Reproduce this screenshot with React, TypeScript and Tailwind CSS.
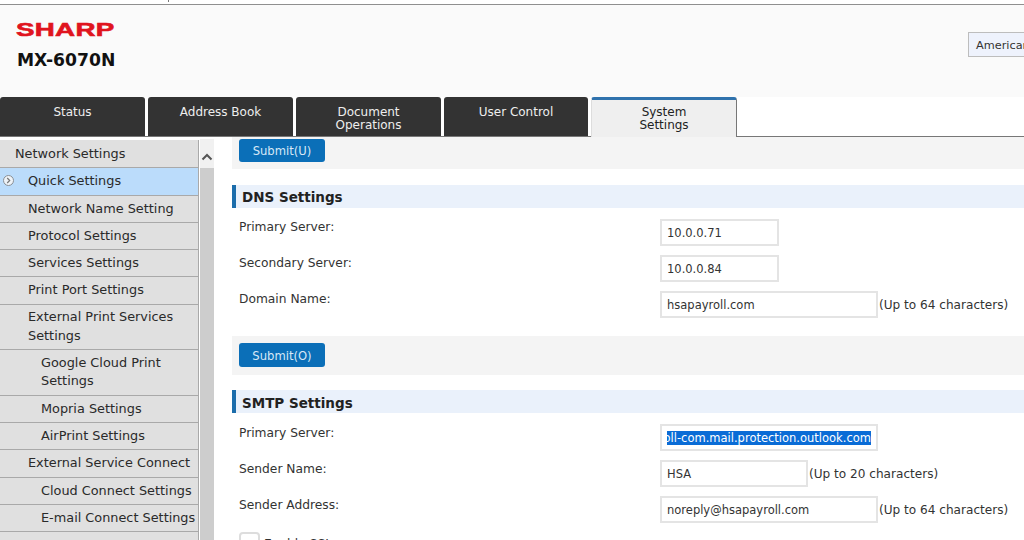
import React from "react";

const font = { fontFamily: '"DejaVu Sans", Verdana, sans-serif' };

function Tab({ label, active, w }: { label: string[]; active?: boolean; w: string }) {
  return (
    <div
      className={
        active
          ? `${w} h-[40px] mr-[3px] rounded-t-[3px] bg-[#efefef] border-t-[3px] border-t-[#2f72ad] border-r border-r-[#777] border-l border-l-[#ddd] flex flex-col items-center pt-[6px] text-[#222] text-[12px] leading-[12.5px] relative z-10`
          : `${w} h-[39px] mr-[3px] rounded-t-[3px] bg-[#333333] flex flex-col items-center pt-[9px] text-[#eeeeee] text-[12px] leading-[12.5px]`
      }
    >
      {label.map((l) => (
        <span key={l}>{l}</span>
      ))}
    </div>
  );
}

function NavItem({
  text,
  level,
  selected,
  h = "h-[27.3px]",
}: {
  text: string[];
  level: 0 | 1 | 2;
  selected?: boolean;
  h?: string;
}) {
  const pad = level === 0 ? "pl-[15px]" : level === 1 ? "pl-[28px]" : "pl-[41px]";
  return (
    <div
      className={`${pad} ${h} ${
        selected ? "bg-[#bbdcfb]" : "bg-[#e0e0e0]"
      } border-b border-b-[#a9a9a9] flex flex-col justify-center text-[12.85px] leading-[18.3px] text-[#2a2a2a] whitespace-nowrap relative`}
    >
      {selected && (
        <svg className="absolute left-[2px] top-[6px]" width="13" height="13" viewBox="0 0 13 13">
          <circle cx="6.5" cy="6.5" r="5" fill="#eef3f8" stroke="#8a8f95" strokeWidth="1" />
          <path d="M5.2 4l2.5 2.5L5.2 9" fill="none" stroke="#777" strokeWidth="1.2" />
        </svg>
      )}
      {text.map((t) => (
        <span key={t}>{t}</span>
      ))}
    </div>
  );
}

function SubmitBar({ label, cls, btnCls }: { label: string; cls: string; btnCls: string }) {
  return (
    <div className={`bg-[#f4f4f4] pl-[7px] ${cls}`}>
      <div
        className={`${btnCls} w-[86px] rounded-[3px] bg-[#0b6fb8] text-[#d8e8f6] text-[11.6px] pt-[3px] flex items-center justify-center`}
      >
        {label}
      </div>
    </div>
  );
}

function SectionHeader({ title, pt }: { title: string; pt: string }) {
  return (
    <div className={`h-[23px] bg-[#eaf1fb] border-l-[4px] border-l-[#1c6dab] pl-[6px] ${pt} flex items-center text-[13.5px] font-bold text-[#222]`}>
      {title}
    </div>
  );
}

function Row({
  label,
  value,
  w,
  hint,
  selected,
  labelPt,
}: {
  label: string;
  value: string;
  w: string;
  hint?: string;
  selected?: boolean;
  labelPt: string;
}) {
  return (
    <div className="grid grid-cols-[421px_1fr] pl-[7px] h-[36px]">
      <div className={`text-[12.25px] leading-[16px] text-[#333] ${labelPt}`}>{label}</div>
      <div className="flex items-start">
        <div
          className={`${w} h-[27px] border-2 border-[#e4e4e4] bg-white text-[11.5px] text-[#333] px-[5px] ${
            selected ? "pt-0" : "pt-[3px]"
          } flex items-center`}
        >
          {selected ? (
            <div className="flex-1 flex justify-end overflow-hidden">
              <span className="bg-[#0a6cd6] text-white whitespace-nowrap leading-[14px]">{value}</span>
            </div>
          ) : (
            <span className="whitespace-nowrap">{value}</span>
          )}
        </div>
        {hint && <span className="text-[12.1px] leading-[27px] text-[#333] pl-[1px] pt-px whitespace-nowrap">{hint}</span>}
      </div>
    </div>
  );
}

export default function App() {
  return (
    <div className="w-[1024px] h-[540px] overflow-hidden bg-white relative" style={font}>
      {/* top strip */}
      <div className="h-[5px] bg-white border-b border-b-[#8f8f8f] pl-[168px]">
        <div className="w-px h-[2px] bg-[#777]" />
      </div>

      {/* header */}
      <div className="h-[92px] bg-[#fafafa] flex justify-between">
        <div className="pl-[16px] pt-[15px]">
          <div
            className="text-[#e0141e] font-black text-[19px] leading-[20px] origin-left scale-x-[1.46] tracking-[0.2px]"
            style={{ fontFamily: '"Liberation Sans", Arial, sans-serif', WebkitTextStroke: "0.6px #e0141e" }}
          >
            SHARP
          </div>
          <div className="text-[#111] font-bold text-[17.2px] leading-[22px] mt-[9px] pl-px">MX-6070N</div>
        </div>
        <div className="mt-[27px] w-[56px] h-[25px] bg-[#eef2fc] border border-[#bdbdbd] border-r-0 pl-[7px] pt-px text-[11.3px] leading-[23px] text-[#333] overflow-hidden whitespace-nowrap">
          American
        </div>
      </div>

      {/* tabs */}
      <div className="h-[40px] border-b border-b-[#777] flex items-start">
        <Tab w="w-[145px]" label={["Status"]} />
        <Tab w="w-[145px]" label={["Address Book"]} />
        <Tab w="w-[145px]" label={["Document", "Operations"]} />
        <Tab w="w-[144px]" label={["User Control"]} />
        <Tab w="w-[146px]" label={["System", "Settings"]} active />
      </div>

      {/* body */}
      <div className="flex h-[404px]">
        <div className="w-[199px] pt-[3px] shrink-0">
          <div className="border-r border-r-[#a9a9a9] bg-[#e0e0e0] h-[401px] overflow-hidden pt-px">
            <NavItem level={0} text={["Network Settings"]} />
            <NavItem level={1} text={["Quick Settings"]} selected />
            <NavItem level={1} text={["Network Name Setting"]} />
            <NavItem level={1} text={["Protocol Settings"]} />
            <NavItem level={1} text={["Services Settings"]} />
            <NavItem level={1} text={["Print Port Settings"]} />
            <NavItem level={1} text={["External Print Services", "Settings"]} h="h-[45px]" />
            <NavItem level={2} text={["Google Cloud Print", "Settings"]} h="h-[46px]" />
            <NavItem level={2} text={["Mopria Settings"]} />
            <NavItem level={2} text={["AirPrint Settings"]} />
            <NavItem level={1} text={["External Service Connect"]} />
            <NavItem level={2} text={["Cloud Connect Settings"]} />
            <NavItem level={2} text={["E-mail Connect Settings"]} />
          </div>
        </div>

        <div className="w-[14px] ml-px mt-[2px] shrink-0 flex flex-col">
          <div className="h-[29px] bg-[#f1f1f1] flex justify-center pt-[14px]">
            <svg width="12" height="8" viewBox="0 0 12 8">
              <path d="M1.5 6.5L6 2l4.5 4.5" fill="none" stroke="#555" strokeWidth="2" />
            </svg>
          </div>
          <div className="flex-1 bg-[#cdcdcd]" />
        </div>

        <div className="w-[792px] ml-[18px] shrink-0">
          <SubmitBar label="Submit(U)" cls="h-[32px] pt-[2px]" btnCls="h-[23px]" />
          <div className="h-[16px]" />
          <SectionHeader title="DNS Settings" pt="pt-[2px]" />
          <div className="pt-[11px]">
            <Row labelPt="pt-[0px]" label="Primary Server:" value="10.0.0.71" w="w-[119px]" />
            <Row labelPt="pt-[0px]" label="Secondary Server:" value="10.0.0.84" w="w-[119px]" />
            <Row labelPt="pt-[0px]" label="Domain Name:" value="hsapayroll.com" w="w-[218px]" hint="(Up to 64 characters)" />
          </div>
          <SubmitBar label="Submit(O)" cls="h-[39px] pt-[7px] mt-[9px]" btnCls="h-[24px]" />
          <div className="h-[15px]" />
          <SectionHeader title="SMTP Settings" pt="pt-[3px]" />
          <div className="pt-[11px]">
            <Row
              labelPt="pt-px"
              label="Primary Server:"
              value="hsapayroll-com.mail.protection.outlook.com"
              w="w-[218px]"
              selected
            />
            <Row labelPt="pt-px" label="Sender Name:" value="HSA" w="w-[148px]" hint="(Up to 20 characters)" />
            <Row labelPt="pt-px" label="Sender Address:" value="noreply@hsapayroll.com" w="w-[218px]" hint="(Up to 64 characters)" />
            <div className="pl-[7px] flex items-start">
              <div className="w-[21px] h-[20px] rounded-[4px] border-2 border-[#ddd] bg-white" />
              <span className="text-[12.25px] leading-[16px] text-[#333] pl-[4px] pt-[4px]">Enable SSL</span>
            </div>
          </div>
        </div>
      </div>
    </div>
  );
}
